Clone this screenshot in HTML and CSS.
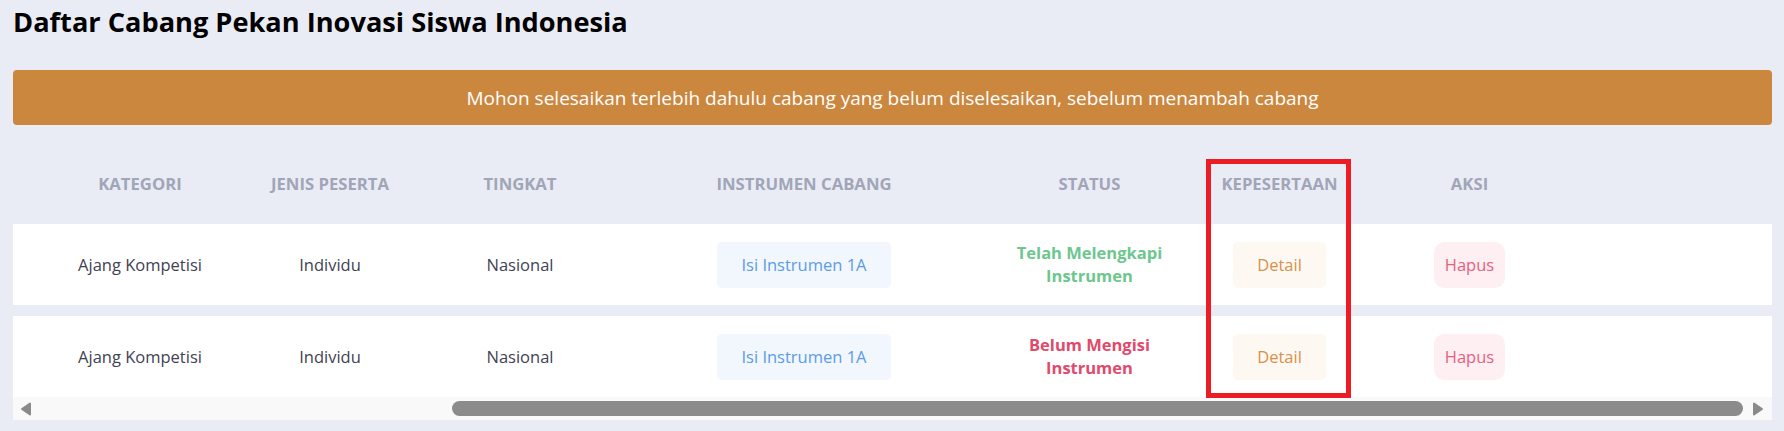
FILE: index.html
```html
<!doctype html>
<html lang="id">
  <head>
    <meta charset="utf-8">
    <meta name="viewport" content="width=device-width, initial-scale=1" />
    <title>Daftar Cabang</title>
    <link rel="stylesheet" href="styles.css">
  </head>
  <body>
    <h1 class="page-title">Daftar Cabang Pekan Inovasi Siswa Indonesia</h1>

    <div class="notice">Mohon selesaikan terlebih dahulu cabang yang belum diselesaikan, sebelum menambah cabang</div>

    <div class="table-wrap">
      <div class="grid thead">
        <div>Kategori</div>
        <div>Jenis Peserta</div>
        <div>Tingkat</div>
        <div>Instrumen Cabang</div>
        <div>Status</div>
        <div>Kepesertaan</div>
        <div>Aksi</div>
        <div></div>
      </div>

      <div class="grid trow">
        <div>Ajang Kompetisi</div>
        <div>Individu</div>
        <div>Nasional</div>
        <div><a class="btn btn-blue">Isi Instrumen 1A</a></div>
        <div><span class="status done">Telah Melengkapi Instrumen</span></div>
        <div><a class="btn btn-orange">Detail</a></div>
        <div><a class="btn btn-red">Hapus</a></div>
        <div></div>
      </div>

      <div class="grid trow">
        <div>Ajang Kompetisi</div>
        <div>Individu</div>
        <div>Nasional</div>
        <div><a class="btn btn-blue">Isi Instrumen 1A</a></div>
        <div><span class="status todo">Belum Mengisi Instrumen</span></div>
        <div><a class="btn btn-orange">Detail</a></div>
        <div><a class="btn btn-red">Hapus</a></div>
        <div></div>
      </div>

      <div class="hscroll">
        <svg class="arrow" width="12" height="14" viewBox="0 0 12 14"><polygon points="10,1.5 10,12.5 2,7" fill="#8a8a8a" stroke="#8a8a8a" stroke-width="2" stroke-linejoin="round"/></svg>
        <div class="track">
          <div class="thumb" style="width: 1291px"></div>
        </div>
        <svg class="arrow" width="12" height="14" viewBox="0 0 12 14"><polygon points="2,1.5 2,12.5 10,7" fill="#8a8a8a" stroke="#8a8a8a" stroke-width="2" stroke-linejoin="round"/></svg>
      </div>

      <!-- highlight round the kepesertaan column -->
      <div class="highlight"></div>
    </div>
  </body>
</html>
```

FILE: styles.css
```css
html, body {
  height: 100%;
}

body {
  font-family: "Open Sans", "Noto Sans", Arial, sans-serif;
  font-size: 16.5px;
  margin: 0;
  padding: 0 12px 0 13px;
  color: #3f4254;
  background-color: #e9ecf5;
}

.page-title {
  margin: 0;
  padding-top: 5px;
  font-size: 27.2px;
  line-height: 34px;
  font-weight: 700;
  color: #000;
}

.notice {
  margin-top: 31px;
  height: 55px;
  display: flex;
  align-items: center;
  justify-content: center;
  border-radius: 4px;
  background-color: #cc873f;
  color: #fff;
  font-size: 19px;
}

.table-wrap {
  position: relative;
  margin-top: 35px;
}

.grid {
  display: grid;
  grid-template-columns: 254px 126px 254px 314px 257px 123px 257px 1fr;
  text-align: center;
}

.thead {
  padding: 12px 0 28px;
  line-height: 24px;
  font-weight: 700;
  font-size: 16.7px;
  text-transform: uppercase;
  color: #a1a5b7;
}

.trow {
  height: 81px;
  align-items: center;
  background-color: #fff;
}

.trow + .trow {
  margin-top: 11px;
}

.btn {
  display: inline-block;
  height: 46px;
  line-height: 46px;
  border-radius: 5px;
  cursor: pointer;
}

.btn-blue {
  padding: 0 24px;
  background-color: #f1f7fd;
  color: #5c9ce6;
}

.btn-orange {
  padding: 0 24px;
  background-color: #fef8f3;
  color: #d5924a;
}

.btn-red {
  padding: 0 11px;
  border-radius: 10px;
  background-color: #fdeff2;
  color: #e8607f;
}

.status {
  display: inline-block;
  max-width: 170px;
  line-height: 22.5px;
  font-weight: 700;
}

.status.done {
  color: #6dc78d;
}

.status.todo {
  color: #e04a6c;
}

.hscroll {
  height: 23px;
  display: flex;
  align-items: center;
  padding: 0 8px 0 7px;
  background-color: #f9f9f9;
}

.hscroll .arrow {
  flex: none;
}

.track {
  flex: 1;
  display: flex;
  justify-content: flex-end;
  padding-right: 9px;
}

.thumb {
  height: 15px;
  border-radius: 8px;
  background-color: #8b8b8b;
}

.highlight {
  position: absolute;
  top: -1px;
  left: 1193px;
  width: 135px;
  height: 229px;
  border: 5px solid #ec1c24;
}
```
